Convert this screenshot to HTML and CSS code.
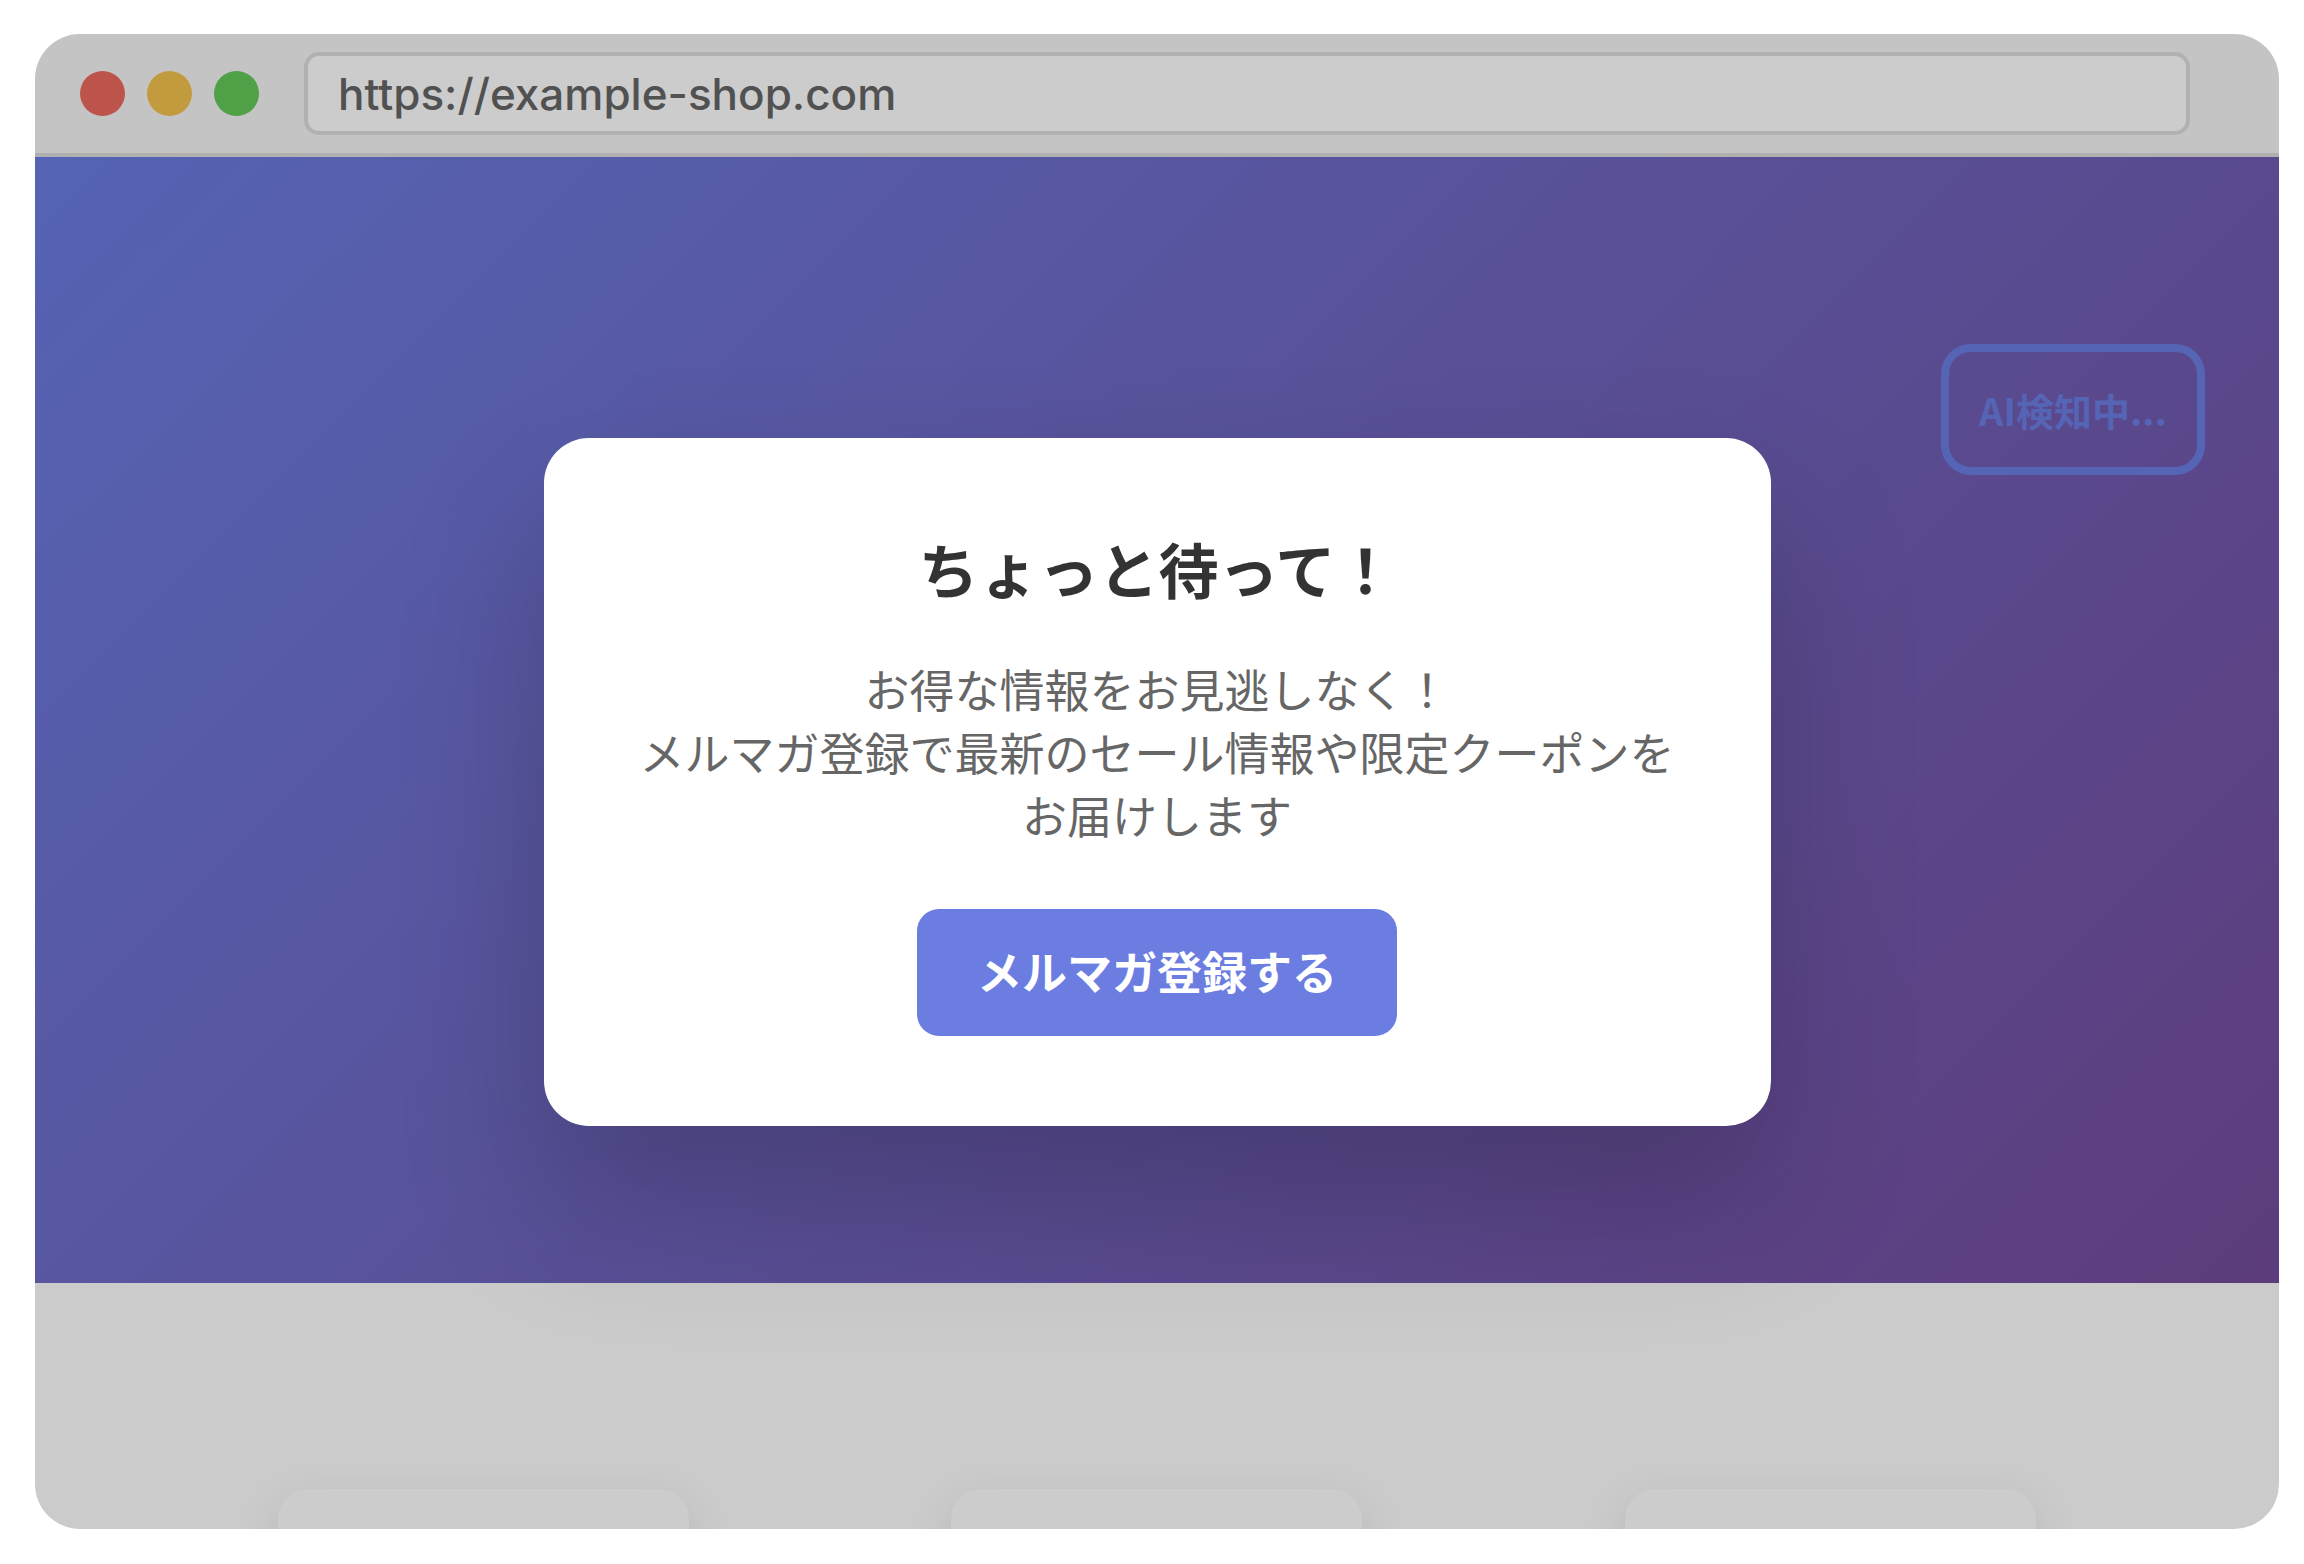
FILE: index.html
```html
<!DOCTYPE html>
<html lang="ja">

<head>
    <meta charset="UTF-8">
    <meta name="viewport" content="width=device-width, initial-scale=1.0">
    <title>Example Shop</title>
    <link rel="stylesheet" href="styles.css">
</head>

<body>
    <div class="browser">
        <header class="browser-bar">
            <div class="dots">
                <span class="dot red"></span>
                <span class="dot yellow"></span>
                <span class="dot green"></span>
            </div>
            <input class="url" type="text" aria-label="URL" value="https://example-shop.com">
        </header>
        <main class="page">
            <section class="hero">
                <div class="ai-badge">AI検知中...</div>
            </section>
            <section class="features">
                <div class="card"></div>
                <div class="card"></div>
                <div class="card"></div>
            </section>
        </main>
        <div class="overlay">
            <div class="modal" role="dialog" aria-labelledby="modal-title">
                <h2 id="modal-title">ちょっと待って！</h2>
                <p>お得な情報をお見逃しなく！<br>メルマガ登録で最新のセール情報や限定クーポンをお届けします</p>
                <button type="button">メルマガ登録する</button>
            </div>
        </div>
    </div>
</body>

</html>
```
FILE: styles.css
```css
:root {
  --color-white: #fff;
  --color-primary: #6b7de1;
  --font-ui: Inter, "Noto Sans CJK JP", sans-serif;
  --font-ja: "Noto Sans CJK JP", sans-serif;
}
* {
  box-sizing: border-box;
}
body {
  margin: 0;
  padding: 34px 25px 35px 35px;
  height: 100vh;
  background-color: var(--color-white);
  font-family: var(--font-ja);
}
.browser {
  position: relative;
  display: flex;
  flex-direction: column;
  height: 100%;
  border-radius: 45px;
  overflow: hidden;
}
/* Browser bar */
.browser-bar {
  display: flex;
  align-items: center;
  gap: 45px;
  padding: 18px 89px 18px 45px;
  background-color: #f5f5f5;
  border-bottom: 4px solid #dcdcdc;
}
.dots {
  display: flex;
  gap: 22px;
}
.dot {
  width: 45px;
  height: 45px;
  border-radius: 50%;
}
.dot.red {
  background-color: #ec6a5e;
}
.dot.yellow {
  background-color: #f4c24f;
}
.dot.green {
  background-color: #64c85a;
}
.url {
  flex: 1;
  height: 83px;
  padding: 0 30px;
  border: 4px solid #dedede;
  border-radius: 15px;
  background-color: var(--color-white);
  color: #666;
  font-family: var(--font-ui);
  font-size: 44px;
  font-weight: 500;
}
/* Page */
.page {
  flex: 1;
  min-height: 0;
  overflow: hidden;
}
.hero {
  position: relative;
  height: 72vh;
  background: linear-gradient(135deg, #6b7de1 0%, #744c9b 100%);
}
.ai-badge {
  position: absolute;
  top: 187px;
  right: 74px;
  padding: 30px;
  border: 8px solid var(--color-primary);
  border-radius: 30px;
  color: var(--color-primary);
  font-size: 38px;
  font-weight: 700;
  line-height: 55px;
}
.features {
  display: flex;
  justify-content: space-around;
  padding: 206px 112px;
  background-color: #fefefe;
}
.card {
  width: 411px;
  height: 300px;
  border-radius: 30px;
  background-color: var(--color-white);
  box-shadow: 0 15px 45px rgba(0, 0, 0, 0.1);
}
/* Modal */
.overlay {
  position: absolute;
  inset: 0;
  display: flex;
  align-items: center;
  justify-content: center;
  background-color: rgba(0, 0, 0, 0.2);
}
.modal {
  width: 1227px;
  padding: 90px;
  border-radius: 45px;
  background-color: var(--color-white);
  box-shadow: 0 75px 150px rgba(0, 0, 0, 0.2);
  text-align: center;
}
.modal h2 {
  margin: 0 0 50px;
  color: #333;
  font-size: 60px;
  line-height: 79px;
}
.modal p {
  margin: 0 0 63px;
  color: #666;
  font-size: 45px;
  line-height: 63px;
}
.modal button {
  display: block;
  margin: 0 auto;
  padding: 28px 60px 32px;
  border: none;
  border-radius: 22px;
  background-color: var(--color-primary);
  color: var(--color-white);
  font-family: inherit;
  font-size: 45px;
  font-weight: 700;
  line-height: 67px;
}
```
